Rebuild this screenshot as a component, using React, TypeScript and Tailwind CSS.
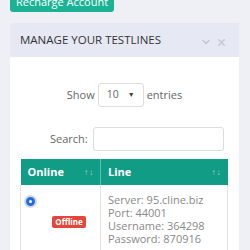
import { ChevronDown, X } from 'lucide-react'

function SortIcon() {
  return (
    <span className="flex items-center gap-[1px] text-[8px] leading-none text-white/60">
      <span>↑</span>
      <span>↓</span>
    </span>
  )
}

export default function App() {
  return (
    <div className="h-[250px] w-[250px] overflow-hidden bg-[#eef0f6] px-[10px] font-['Open_Sans',sans-serif]">
      <button className="mt-[-8px] flex h-[20px] items-center rounded-[3px] bg-[#1bb394] px-[6px] text-[11px] text-white">
        Recharge Account
      </button>

      <div className="mt-[11px] w-[229px]">
        <div className="flex h-[34px] items-center justify-between bg-[#e6e9f4] pl-[10px] pr-[12px]">
          <h2 className="text-[11.5px] text-[#333]">MANAGE YOUR TESTLINES</h2>
          <div className="mt-[4px] flex items-center gap-[4px] text-[#c3c7d2]">
            <ChevronDown size={12} strokeWidth={3} />
            <X size={11} strokeWidth={3} />
          </div>
        </div>

        <div className="bg-white px-[10px] pt-[26px]">
          <div className="flex items-center justify-center gap-[3px] text-[11px] text-[#666]">
            <span>Show</span>
            <div className="flex h-[24px] w-[46px] items-center justify-between rounded-[3px] border border-[#ddd] px-[8px] text-[10.5px]">
              <span>10</span>
              <span className="text-[7px] text-[#444]">▼</span>
            </div>
            <span>entries</span>
          </div>

          <div className="mt-[20px] flex items-center pl-[30px] text-[11px] text-[#666]">
            <span>Search:</span>
            <div className="ml-[5px] h-[24px] w-[131px] rounded-[3px] border border-[#ddd]" />
          </div>

          <table className="mt-[8px] w-[208px] border-collapse text-[11px]">
            <thead>
              <tr className="h-[26px] bg-[#119c86] text-white">
                <th className="w-[80px] border-r border-[#5fbfae] px-[7px] text-left font-bold">
                  <div className="flex items-center justify-between">
                    Online
                    <SortIcon />
                  </div>
                </th>
                <th className="px-[7px] text-left font-bold">
                  <div className="flex items-center justify-between">
                    Line
                    <SortIcon />
                  </div>
                </th>
              </tr>
            </thead>
            <tbody>
              <tr>
                <td className="border-l border-r border-[#e4e4e4] align-top">
                  <div className="relative h-[70px]">
                    <span className="absolute left-[3px] top-[10px] flex h-[13px] w-[13px] items-center justify-center rounded-full border-[2px] border-[#d4d8e0] bg-[#1e6fe0]">
                      <span className="h-[3px] w-[3px] rounded-full bg-white" />
                    </span>
                    <span className="absolute left-[31px] top-[31px] flex h-[12px] w-[34px] items-center justify-center rounded-[2px] bg-[#e4463b] text-[8px] font-bold text-white">
                      Offline
                    </span>
                  </div>
                </td>
                <td className="border-r border-[#e4e4e4] px-[7px] pt-[8px] align-top text-[11px] leading-[13px] text-[#8a8a8a]">
                  <div>Server: 95.cline.biz</div>
                  <div>Port: 44001</div>
                  <div>Username: 364298</div>
                  <div>Password: 870916</div>
                </td>
              </tr>
            </tbody>
          </table>
        </div>
      </div>
    </div>
  )
}
